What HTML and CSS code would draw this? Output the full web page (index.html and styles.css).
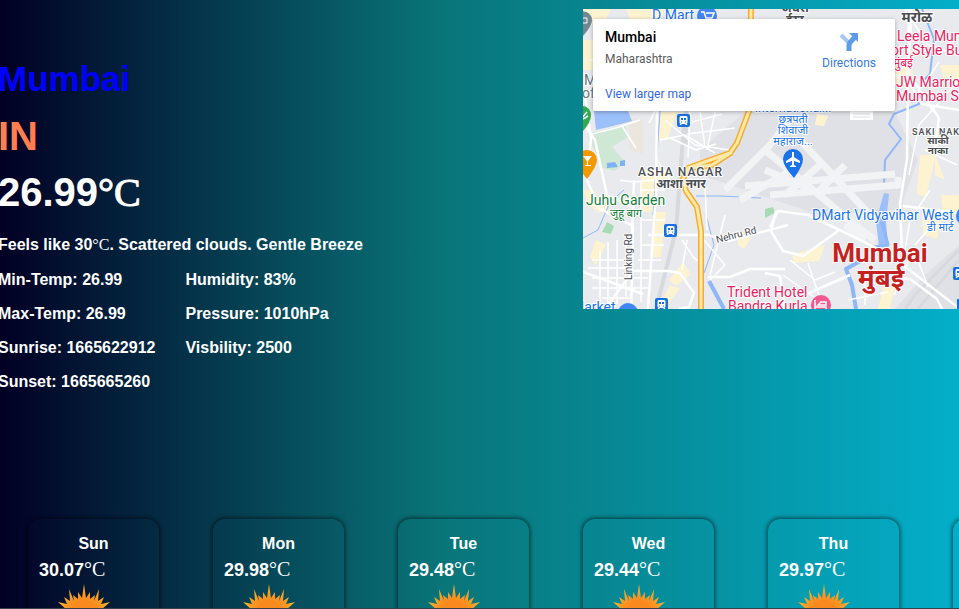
FILE: index.html
```html
<!DOCTYPE html>
<html lang="en">
<head>
<meta charset="utf-8">
<title>Weather</title>
<link rel="stylesheet" href="styles.css">
</head>
<body>
<svg class="defs" aria-hidden="true">
  <defs>
    <radialGradient id="glow"><stop offset="0" stop-color="#f7791e"/><stop offset="0.6" stop-color="#f99422"/><stop offset="1" stop-color="#f7b52c"/></radialGradient>
    <symbol id="sun" viewBox="-45 -30 90 60">
      <path fill="url(#glow)" d="M0-29L2-15L6-21L6-14L11-18L10-12L15-24L14-12L20-16L17-9L26-11L17-3L28 0L17 3L26 11L14 10L15 24L6 15L0 29L-6 15L-15 24L-14 10L-26 11L-17 3L-28 0L-17-3L-26-11L-17-9L-20-16L-14-12L-15-24L-10-12L-11-18L-6-14L-6-21L-2-15Z"/>
      <circle r="13" fill="#f98a1f"/>
    </symbol>
    <symbol id="train" viewBox="0 0 13 13">
      <rect width="13" height="13" rx="2" fill="#1a6fe0"/>
      <path fill="#fff" fill-rule="evenodd" d="M4 2h5q1.500 0 1.500 1.500v5q0 1-1 1L10.500 11H9L8 10H5L4 11H2.500L3.500 9.500q-1 0-1-1v-5Q2.500 2 4 2zM4 4v2h2V4zM7 4v2h2V4zM4 7.500v1h1v-1zM8 7.500v1h1v-1z"/>
    </symbol>
  </defs>
</svg>
<main class="page">
  <div class="top">
    <section class="current">
      <h1 class="city">Mumbai</h1>
      <p class="country">IN</p>
      <p class="temp">26.99<span class="deg">°C</span></p>
      <p class="summary">Feels like 30<span class="deg">°C</span>. Scattered clouds. Gentle Breeze</p>
      <div class="details">
        <ul class="list"><li>Min-Temp: 26.99</li><li>Max-Temp: 26.99</li><li>Sunrise: 1665622912</li><li>Sunset: 1665665260</li></ul>
        <ul class="list"><li>Humidity: 83%</li><li>Pressure: 1010hPa</li><li>Visbility: 2500</li></ul>
      </div>
    </section>
    <section class="map" aria-label="Map of Mumbai">
      <svg class="tiles" viewBox="583 9 376 300" preserveAspectRatio="xMinYMin slice">
        <rect x="583" y="9" width="376" height="300" fill="#e8eaed"/>
        <g fill="#dfe1e6">
          <path d="M700 150L745 112H895L918 160L900 210L820 215L700 175z"/>
          <path d="M895 309L925 275L959 245V309z"/>
        </g>
        <g fill="#fdf3d0">
          <path d="M583 9h28l-8 16h-20zM626 9h42l-8 10h-30zM583 40h10v30h-10zM660 112h17l-10 28h-8zM641 170h25l4 12h-13l-3 30h-13zM654 212h12l-5 45h-9zM583 190h10l15 18-8 5-12-8zM596 240l10 5-10 20-6-8zM683 262l8 12-15 12-7-6zM670 285l10 4-12 14-5-5zM738 235l14 2-8 12-6-4zM920 155h16l-10 42-9-3zM935 155l10 25-10-5zM941 195h18v16h-16zM922 205l20 14-5 20-14-4zM792 255l18-6 15-4-6 16-25 2zM885 280l10 5-5 24h-12zM817 114l11 2-4 10-9-1zM895 65l18 5-2 20-16-6zM940 65h19v15h-15z"/>
        </g>
        <g fill="#cfe8d6">
          <path d="M590 133l35-8 3 12-16 10 14 16-12 8-14-4-4-14-8-16z"/>
          <path fill="#a8dab5" d="M765 209l8-2 2 6-10 5zM607 222l7 4-3 8-9-2z"/>
          <path fill="#ece7de" d="M629 118l14 2v34l-14-4z"/>
        </g>
        <path fill="#9cc0f9" d="M594 111h34l4 10-15 4-21 5zM884 193l5 1-3 28 2 23-9 2-3-26z"/>
        <path fill="#7fb0f5" d="M607 163l8-1 3 5-11 1zM620 161l5-1v6h-5z"/>
        <g fill="none" stroke="#8fb7f7" stroke-linejoin="round">
          <path stroke-width="2" d="M922 9l12 30-4 35-8 8-3 22-25 10-5 10 12 15-16 21-1 25"/>
          <path stroke-width="1" d="M660 111l-3 44-4 60M583 238l15-8 12-28 14-12M696 196h25l40 2M706 215l8 30-10 28"/>
          <path stroke-width="4" d="M862 260l-16 9 6 16 4 24M709 281l15 28"/>
          <path stroke-width="3" d="M882 222l6 23-14 2"/>
        </g>
        <g fill="none" stroke="#d7d9de" stroke-width="4"><path d="M684 125L676 230L656 309M686 111v35"/><path stroke-width="3" d="M959 250L915 295L905 309M959 260L918 309"/></g>
        <g fill="none" stroke="#f2f3f5" stroke-width="7">
          <path d="M745 186L895 174M770 195l128-10v-8M765 150l90 75 20 15M800 140l70 75M765 170l60 25M820 165l-35 30M845 165l-30 30M725 190l45-45 20-25M740 200l60-35M845 225l20 15"/>
        </g>
        <g fill="none" stroke="#fff" stroke-width="1.500" stroke-linejoin="round">
          <path stroke-width="2.500" d="M585 95l6 45-4 40 12 28 34 18-2 90M583 122l12 18 12 55 24 12M657 111l-1 80-8 118M583 272l60 22M605 309l28-38 35 0 12 2 14 20-5 14-10 2M634 180l-2 55M648 235h60l20 6 60-16M708 277h22l20-8h35"/>
          <path d="M590 60h65M592 134l24-6 24-8M622 126l14 22M655 111l-6 12M665 120l30 25M660 140l25-5 30 18M690 112l-2 45M700 112l5 35M715 112l-8 38M692 122l30-8M687 134l48-6M695 145l35 5M670 138l26 12 20-6M620 180l14 2 20-2M600 250v55M608 242v62M617 240v64M626 240v58M592 260h38M588 268h40M592 278h56M592 288h56M602 298h30M640 190h25M640 205h25M640 220h25M640 245h24M638 260h23M641 182v120M657 160l15 22M687 240l-5 30M682 240l12 18 8 5M705 185l2 45M725 215l-15 60M700 235l25 30-15 15"/>
          <path stroke-width="2.500" d="M912 9l-5 70 15 25 37 6M895 75l20 8 24 35-5 37M909 9l-2 150-7 45 2 50M903 206l56 7M770 227l8-16 30 4 42 20 40 20 70 54M765 273l15 3 5 33M850 275l-50 22-25-5M883 277l27 2 27 20 5 10M776 211l-5 20 12 20 20 5 35-25"/>
          <path d="M905 9l22 35 32 12M939 62l-20 30 15 20M959 80l-40 45-10 50M925 150l32 15M930 190l-20 30-5 30M945 210l-30 35M790 260l25 20 20-8M783 275l45 32M808 263l10 30 12 14M730 282l22 17 15-9M865 270v35M848 300l40-8M909 260l-15 35M916 255l12 32"/>
        </g>
        <g fill="none" stroke-linejoin="round">
          <path stroke="#f5ad2f" stroke-width="6" d="M751 9l-2 102-12 32-7 10-42 15-5 11 3 12 11 16 4 24v78M683 173l8-5 21-3 20-13"/>
          <path stroke="#ffe9a8" stroke-width="3" d="M751 9l-2 102-12 32-7 10-42 15-5 11 3 12 11 16 4 24v78M683 173l8-5 21-3 20-13"/>
        </g>
        <g class="label">
          <text class="blue m14" x="652" y="20">D Mart</text>
          <circle cx="707" cy="16" r="10" fill="#4285f4"/><path d="M701 12h3l2 6h6l2-5h-8" fill="none" stroke="#fff" stroke-width="1.500"/><circle cx="707" cy="21" r="1" fill="#fff"/><circle cx="711" cy="21" r="1" fill="#fff"/>
          <path fill="#718791" d="M575 20a8 8 0 0 1 17 0q0 6-9 16z"/><path d="M583 18h4v5h-4" fill="none" stroke="#fff"/>
          <text class="slate m14" x="584" y="85">M</text><text class="slate m14" x="582" y="98">of</text>
          <path fill="#34a853" d="M575 115a8 9 0 0 1 16 0q0 7-8 16z"/><path d="M581 119l6-7M583 119l5-3" stroke="#fff" stroke-width="1.500"/>
          <path fill="#f29900" d="M577 160a10 10 0 0 1 20 0q0 6-10 19q-10-12-10-19z"/><path fill="#fff" d="M583 156h9l-4 5v4h3v1h-6v-1h2v-4z"/>
          <use href="#train" x="677" y="114" width="13" height="13"/>
          <use href="#train" x="664" y="224" width="13" height="13"/>
          <use href="#train" x="655" y="298" width="13" height="13"/>
          <use href="#train" x="953" y="267" width="13" height="13"/>
          <rect x="957" y="299" width="10" height="10" fill="#1a6fe0"/>
          <path d="M850 111h23v9h-23z" fill="#fff"/><path d="M853 114h17M853 117h17" stroke="#dfe1e6"/>
          <text class="dark m12 mid bold" x="795" y="12">अंधेरी</text><text class="dark m12 mid bold" x="795" y="24">ईस्ट</text>
          <text class="dark m14 mid bold" x="917" y="22">मरोळ</text>
          <text class="pink m14" x="897" y="41">Leela Mumbai</text><text class="pink m14" x="891" y="55">ort Style Business</text><text class="pink m12" x="893" y="67">मुंबई</text>
          <text class="pink m14" x="896" y="87">JW Marriott</text><text class="pink m14" x="896" y="101">Mumbai Sahar</text>
          <text class="dark m9 wide" x="912" y="135">SAKI NAKA</text><text class="dark m10 mid bold" x="938" y="144">साकी</text><text class="dark m10 mid bold" x="938" y="154">नाका</text>
          <text class="blue m12 mid" x="793" y="112">International...</text><text class="blue m11 mid" x="793" y="123">छत्रपती</text><text class="blue m11 mid" x="793" y="134">शिवाजी</text><text class="blue m11 mid" x="793" y="145">महाराज...</text>
          <path fill="#1a73e8" d="M783 159a10 10 0 0 1 20 0q0 7-9 19q-11-12-11-19z"/><path fill="#fff" d="M792 152h2v5l6 4v2l-6-2v4l2 1v1h-6v-1l2-1v-4l-6 2v-2l6-4z"/>
          <text class="dark m12 wide" x="638" y="176">ASHA NAGAR</text><text class="dark m12 mid bold" x="681" y="188">आशा नगर</text>
          <text class="green m14" x="586" y="205">Juhu Garden</text><text class="green m11 mid" x="626" y="217">जुहू बाग</text>
          <text class="dark m10" transform="translate(632 280) rotate(-90)">Linking Rd</text>
          <text class="dark m10" transform="translate(717 243) rotate(-14)">Nehru Rd</text>
          <text class="blue m14" x="812" y="220">DMart Vidyavihar West</text><circle cx="966" cy="216" r="10" fill="#4285f4"/><text class="blue m11" x="927" y="231">डी मार्ट</text>
          <text class="red m26 mid bold" x="880" y="262">Mumbai</text><text class="red m26 mid bold" x="881" y="287">मुंबई</text>
          <text class="pink m14" x="727" y="297">Trident Hotel</text><text class="pink m14" x="728" y="311">Bandra Kurla</text>
          <circle cx="821" cy="305" r="10" fill="#ef5a93"/><path d="M815 300v10M815 307h11v3M818 305h8v-3h-5z" stroke="#fff" stroke-width="1.500" fill="none"/>
          <text class="blue m14" x="572" y="312">Market</text><circle cx="628" cy="313" r="10" fill="#4285f4"/>
        </g>
      </svg>
      <div class="place">
        <div><h2 class="name">Mumbai</h2><p class="region">Maharashtra</p><a class="link" href="#">View larger map</a></div>
        <a class="directions" href="#">
          <svg width="20" height="20" viewBox="0 0 20 20" aria-hidden="true"><path d="M2 3l7 7" stroke="#a8c8f3" stroke-width="4"/><path d="M10 19v-5q0-3 2-4.500l4-4.500" fill="none" stroke="#5e9ae8" stroke-width="5"/><path fill="#5e9ae8" d="M10 1h9v9z"/></svg>
          Directions
        </a>
      </div>
    </section>
  </div>
  <section class="forecast" aria-label="Forecast">
    <article class="card"><h3 class="day">Sun</h3><p class="high">30.07<span class="deg">°C</span></p><svg class="sun" viewBox="0 0 90 60"><use href="#sun"/></svg></article>
    <article class="card"><h3 class="day">Mon</h3><p class="high">29.98<span class="deg">°C</span></p><svg class="sun" viewBox="0 0 90 60"><use href="#sun"/></svg></article>
    <article class="card"><h3 class="day">Tue</h3><p class="high">29.48<span class="deg">°C</span></p><svg class="sun" viewBox="0 0 90 60"><use href="#sun"/></svg></article>
    <article class="card"><h3 class="day">Wed</h3><p class="high">29.44<span class="deg">°C</span></p><svg class="sun" viewBox="0 0 90 60"><use href="#sun"/></svg></article>
    <article class="card"><h3 class="day">Thu</h3><p class="high">29.97<span class="deg">°C</span></p><svg class="sun" viewBox="0 0 90 60"><use href="#sun"/></svg></article>
    <article class="card"></article>
  </section>
</main>
</body>
</html>
```
FILE: styles.css
```css
* { box-sizing: border-box; margin: 0; padding: 0; }
body { font-family: "Liberation Sans", Arial, sans-serif; font-weight: 700; color: #fff; }
.defs { position: absolute; width: 0; height: 0; }
.page {
  height: 100vh;
  overflow: hidden;
  padding-top: 9px;
  border-bottom: 1px solid #3b3f4a;
  background: linear-gradient(90deg, rgb(2, 0, 36) 0%, rgb(9, 117, 121) 46%, rgb(0, 212, 255) 136%);
}
.top { display: grid; grid-template-columns: 583px 1fr; align-items: start; }
.current { padding-top: 41px; margin-left: -2px; }
.city { font-size: 35px; line-height: 58px; color: #00f; }
.country { font-size: 40px; line-height: 56px; color: coral; }
.temp { font-size: 40px; line-height: 56px; }
.deg { font-family: "Liberation Serif", "Times New Roman", serif; font-weight: 400; line-height: 1; }
.temp .deg { -webkit-text-stroke: 1px #fff; }
.summary { margin-top: 7px; font-size: 16px; line-height: 36px; }
.details { display: flex; gap: 30px; font-size: 16px; line-height: 34px; }
.list { list-style: none; }
.map { position: relative; height: 300px; overflow: hidden; font-family: Roboto, sans-serif; font-weight: 400; }
.tiles { display: block; width: 100%; height: 100%; }
.label text { paint-order: stroke; stroke: #fff; stroke-width: 2px; stroke-linejoin: round; font-family: Roboto, "Noto Sans", sans-serif; }
.label .mid { text-anchor: middle; }
.label .bold { font-weight: 700; }
.label .wide { letter-spacing: 1px; font-weight: 500; }
.m9 { font-size: 9px; } .m10 { font-size: 10px; } .m11 { font-size: 11px; } .m12 { font-size: 12px; }
.m14 { font-size: 14px; } .m26 { font-size: 26px; }
.blue { fill: #1a73e8; } .pink { fill: #e91e63; } .green { fill: #188038; }
.slate { fill: #5f7682; } .dark { fill: #4a4d52; } .red { fill: #c5221f; }
.place {
  position: absolute; top: 10px; left: 10px; width: 302px; padding: 8px 12px;
  display: flex; justify-content: space-between; align-items: flex-start;
  background: #fff; border-radius: 2px; box-shadow: 0 1px 4px rgba(0, 0, 0, 0.3); color: #000;
}
.name { font-size: 14px; line-height: 20px; font-weight: 500; }
.region { font-size: 12px; line-height: 24px; color: #5b5b5b; }
.link { display: block; margin-top: 14px; font-size: 12px; line-height: 18px; color: #3367e0; text-decoration: none; }
.directions { display: flex; flex-direction: column; align-items: center; padding: 5px 7px; font-size: 12px; line-height: 22px; color: #3878e0; text-decoration: none; }
.forecast { display: flex; gap: 54px; margin: 120px 0 0 28px; }
.card { flex: none; width: 131px; min-height: 180px; padding: 12px 11px; border-radius: 12px; box-shadow: 0 0 4px 1px rgba(0, 0, 0, 0.6); }
.day { font-size: 16px; line-height: 26px; text-align: center; }
.high { font-size: 18px; line-height: 26px; }
.high .deg { font-size: 20px; }
.sun { display: block; width: 90px; height: 60px; }
```
